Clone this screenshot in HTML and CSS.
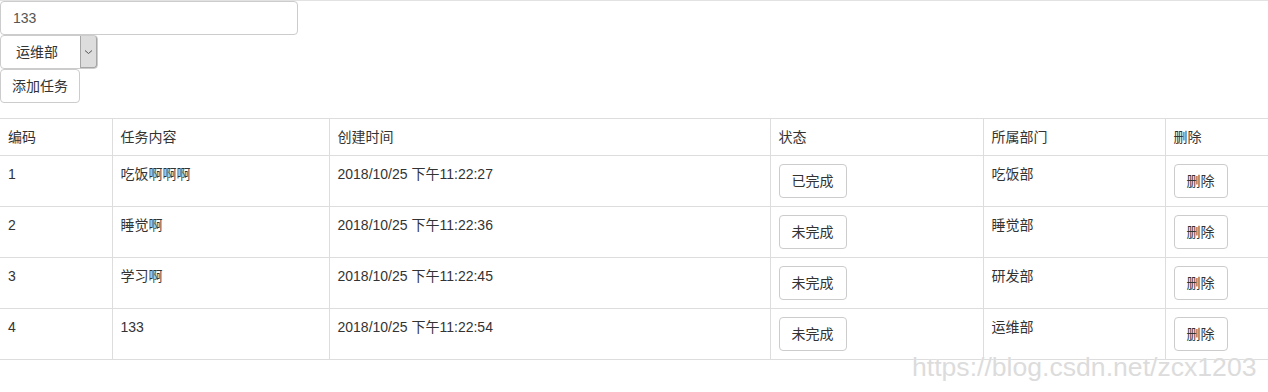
FILE: index.html
```html
<!DOCTYPE html>
<html lang="zh-CN">
<head>
<meta charset="utf-8">
<title>任务列表</title>
<link rel="stylesheet" href="styles.css">
</head>
<body>
<div class="topline"></div>
<div class="form">
  <input class="input" type="text" value="133">
  <div class="select">
    <span class="select-text">运维部</span>
    <span class="select-arrow">
      <svg width="9" height="6" viewBox="0 0 9 6"><path d="M1 1.5 L4.5 4.5 L8 1.5" fill="none" stroke="#555" stroke-width="1"/></svg>
    </span>
  </div>
  <button class="btn btn-add">添加任务</button>
</div>
<table class="table">
  <colgroup>
    <col class="c1"><col class="c2"><col class="c3"><col class="c4"><col class="c5"><col class="c6">
  </colgroup>
  <thead>
    <tr><td>编码</td><td>任务内容</td><td>创建时间</td><td>状态</td><td>所属部门</td><td>删除</td></tr>
  </thead>
  <tbody>
    <tr><td>1</td><td>吃饭啊啊啊</td><td>2018/10/25 下午11:22:27</td><td><button class="btn">已完成</button></td><td>吃饭部</td><td><button class="btn">删除</button></td></tr>
    <tr><td>2</td><td>睡觉啊</td><td>2018/10/25 下午11:22:36</td><td><button class="btn">未完成</button></td><td>睡觉部</td><td><button class="btn">删除</button></td></tr>
    <tr><td>3</td><td>学习啊</td><td>2018/10/25 下午11:22:45</td><td><button class="btn">未完成</button></td><td>研发部</td><td><button class="btn">删除</button></td></tr>
    <tr><td>4</td><td>133</td><td>2018/10/25 下午11:22:54</td><td><button class="btn">未完成</button></td><td>运维部</td><td><button class="btn">删除</button></td></tr>
  </tbody>
</table>
<div class="watermark">https://blog.csdn.net/zcx1203</div>
</body>
</html>
```
FILE: styles.css
```css
html, body {
  margin: 0;
  padding: 0;
  background: #fff;
}
body {
  font-family: "Liberation Sans", "Noto Sans CJK SC", Arial, sans-serif;
  font-size: 14px;
  line-height: 20px;
  color: #333;
  position: relative;
  height: 392px;
  overflow: hidden;
}
.topline {
  height: 1px;
  background: #e2e2e2;
}
.form {
  display: flex;
  flex-direction: column;
  align-items: flex-start;
}
.input {
  box-sizing: border-box;
  width: 298px;
  height: 34px;
  margin: 0;
  padding: 6px 12px;
  border: 1px solid #ccc;
  border-radius: 4px;
  font: inherit;
  color: #555;
  outline: none;
}
.select {
  box-sizing: border-box;
  width: 98px;
  height: 34px;
  border: 1px solid #ccc;
  border-radius: 4px;
  display: flex;
  align-items: stretch;
  justify-content: space-between;
}
.select-text {
  padding: 6px 0 0 15px;
  color: #333;
}
.select-arrow {
  box-sizing: border-box;
  width: 17px;
  background: #dddddd;
  border: 1px solid #a6a6a6;
  border-top: none;
  border-radius: 0 3px 3px 0;
  display: flex;
  align-items: center;
  justify-content: center;
}
.btn {
  box-sizing: border-box;
  margin: 0;
  padding: 6px 12px;
  height: 34px;
  border: 1px solid #ccc;
  border-radius: 4px;
  background: #fff;
  font: inherit;
  color: #333;
  line-height: 20px;
}
.btn-add {
  padding: 6px 11px;
}
.table {
  margin-top: 15px;
  width: 1268px;
  border-collapse: collapse;
  table-layout: fixed;
}
.table td {
  border: 1px solid #ddd;
  padding: 8px;
  vertical-align: top;
  line-height: 20px;
}
.table td:first-child {
  border-left: none;
}
.table td:last-child {
  border-right: none;
}
.c1 { width: 112px; }
.c2 { width: 217px; }
.c3 { width: 441px; }
.c4 { width: 213px; }
.c5 { width: 182px; }
.c6 { width: 103px; }
.watermark {
  position: absolute;
  left: 912px;
  top: 351px;
  font-family: "Liberation Sans", Arial, sans-serif;
  font-size: 26.6px;
  line-height: 32px;
  color: #dcdcdc;
  text-shadow: 0 0 1px #fff;
  white-space: nowrap;
}
```
